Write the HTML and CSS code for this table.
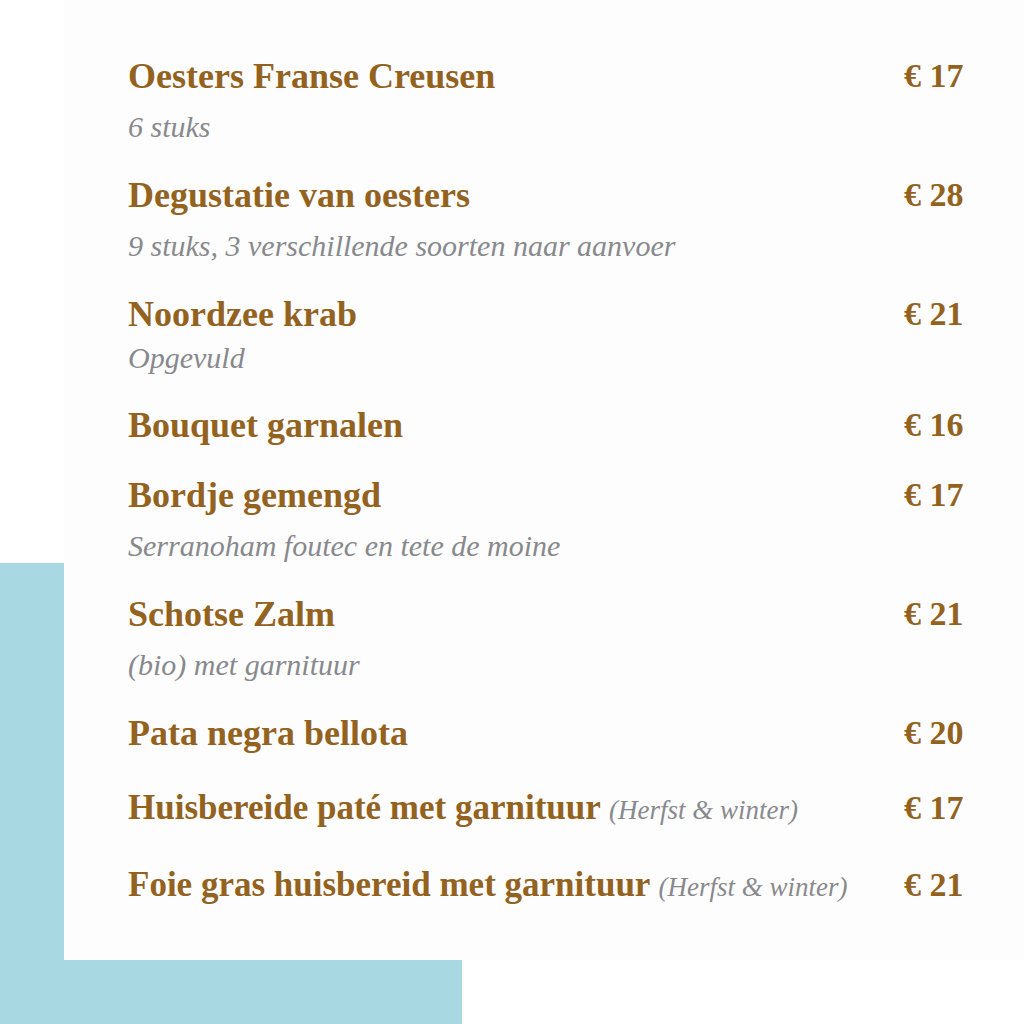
FILE: index.html
```html
<!DOCTYPE html>
<html lang="nl">
<head>
<meta charset="utf-8">
<title>Menu</title>
<link rel="stylesheet" href="styles.css">
</head>
<body>
<div class="page">
  <div class="accent"></div>
  <main class="card">
    <ul class="menu">
      <li class="item">
        <div class="name">Oesters Franse Creusen</div>
        <div class="price">€ 17</div>
        <div class="desc">6 stuks</div>
      </li>
      <li class="item">
        <div class="name">Degustatie van oesters</div>
        <div class="price">€ 28</div>
        <div class="desc">9 stuks, 3 verschillende soorten naar aanvoer</div>
      </li>
      <li class="item">
        <div class="name">Noordzee krab</div>
        <div class="price">€ 21</div>
        <div class="desc tight">Opgevuld</div>
      </li>
      <li class="item">
        <div class="name">Bouquet garnalen</div>
        <div class="price">€ 16</div>
      </li>
      <li class="item">
        <div class="name">Bordje gemengd</div>
        <div class="price">€ 17</div>
        <div class="desc">Serranoham foutec en tete de moine</div>
      </li>
      <li class="item">
        <div class="name">Schotse Zalm</div>
        <div class="price">€ 21</div>
        <div class="desc">(bio) met garnituur</div>
      </li>
      <li class="item">
        <div class="name">Pata negra bellota</div>
        <div class="price">€ 20</div>
      </li>
      <li class="item wide">
        <div class="name">Huisbereide paté met garnituur <span class="note">(Herfst &amp; winter)</span></div>
        <div class="price">€ 17</div>
      </li>
      <li class="item wide">
        <div class="name">Foie gras huisbereid met garnituur <span class="note">(Herfst &amp; winter)</span></div>
        <div class="price">€ 21</div>
      </li>
    </ul>
  </main>
</div>
</body>
</html>
```

FILE: styles.css
```css
html, body {
  margin: 0;
  padding: 0;
  background: #ffffff;
}

.page {
  width: 1024px;
  height: 1024px;
  display: grid;
  grid-template-columns: 64px 398px 1fr;
  grid-template-rows: 563px 397px 64px;
  overflow: hidden;
}

.accent {
  grid-column: 1 / 3;
  grid-row: 2 / 4;
  background: #a8d8e2;
}

.card {
  grid-column: 2 / 4;
  grid-row: 1 / 3;
  z-index: 1;
  background: #fdfdfd;
  padding: 56px 0 0 64px;
}

.menu {
  list-style: none;
  margin: 0;
  padding: 0;
  display: flex;
  flex-direction: column;
  gap: 30px;
}

.item {
  display: grid;
  grid-template-columns: 1fr 120px;
}

.item.wide {
  margin-top: 5px;
}

.name, .price {
  font-family: "Liberation Serif", "Times New Roman", serif;
  font-weight: 700;
  font-size: 36px;
  line-height: 40px;
  color: #93621f;
  white-space: nowrap;
}

.wide .name {
  font-size: 35px;
}

.price {
  font-size: 34px;
}

.desc {
  grid-column: 1 / 3;
  font-family: "Liberation Serif", "Times New Roman", serif;
  font-style: italic;
  font-size: 30px;
  line-height: 36px;
  margin-top: 13px;
  color: #88898d;
}

.desc.tight {
  margin-top: 6px;
  line-height: 35px;
}

.note {
  font-weight: 400;
  font-style: italic;
  font-size: 27px;
  color: #88898d;
}
```
